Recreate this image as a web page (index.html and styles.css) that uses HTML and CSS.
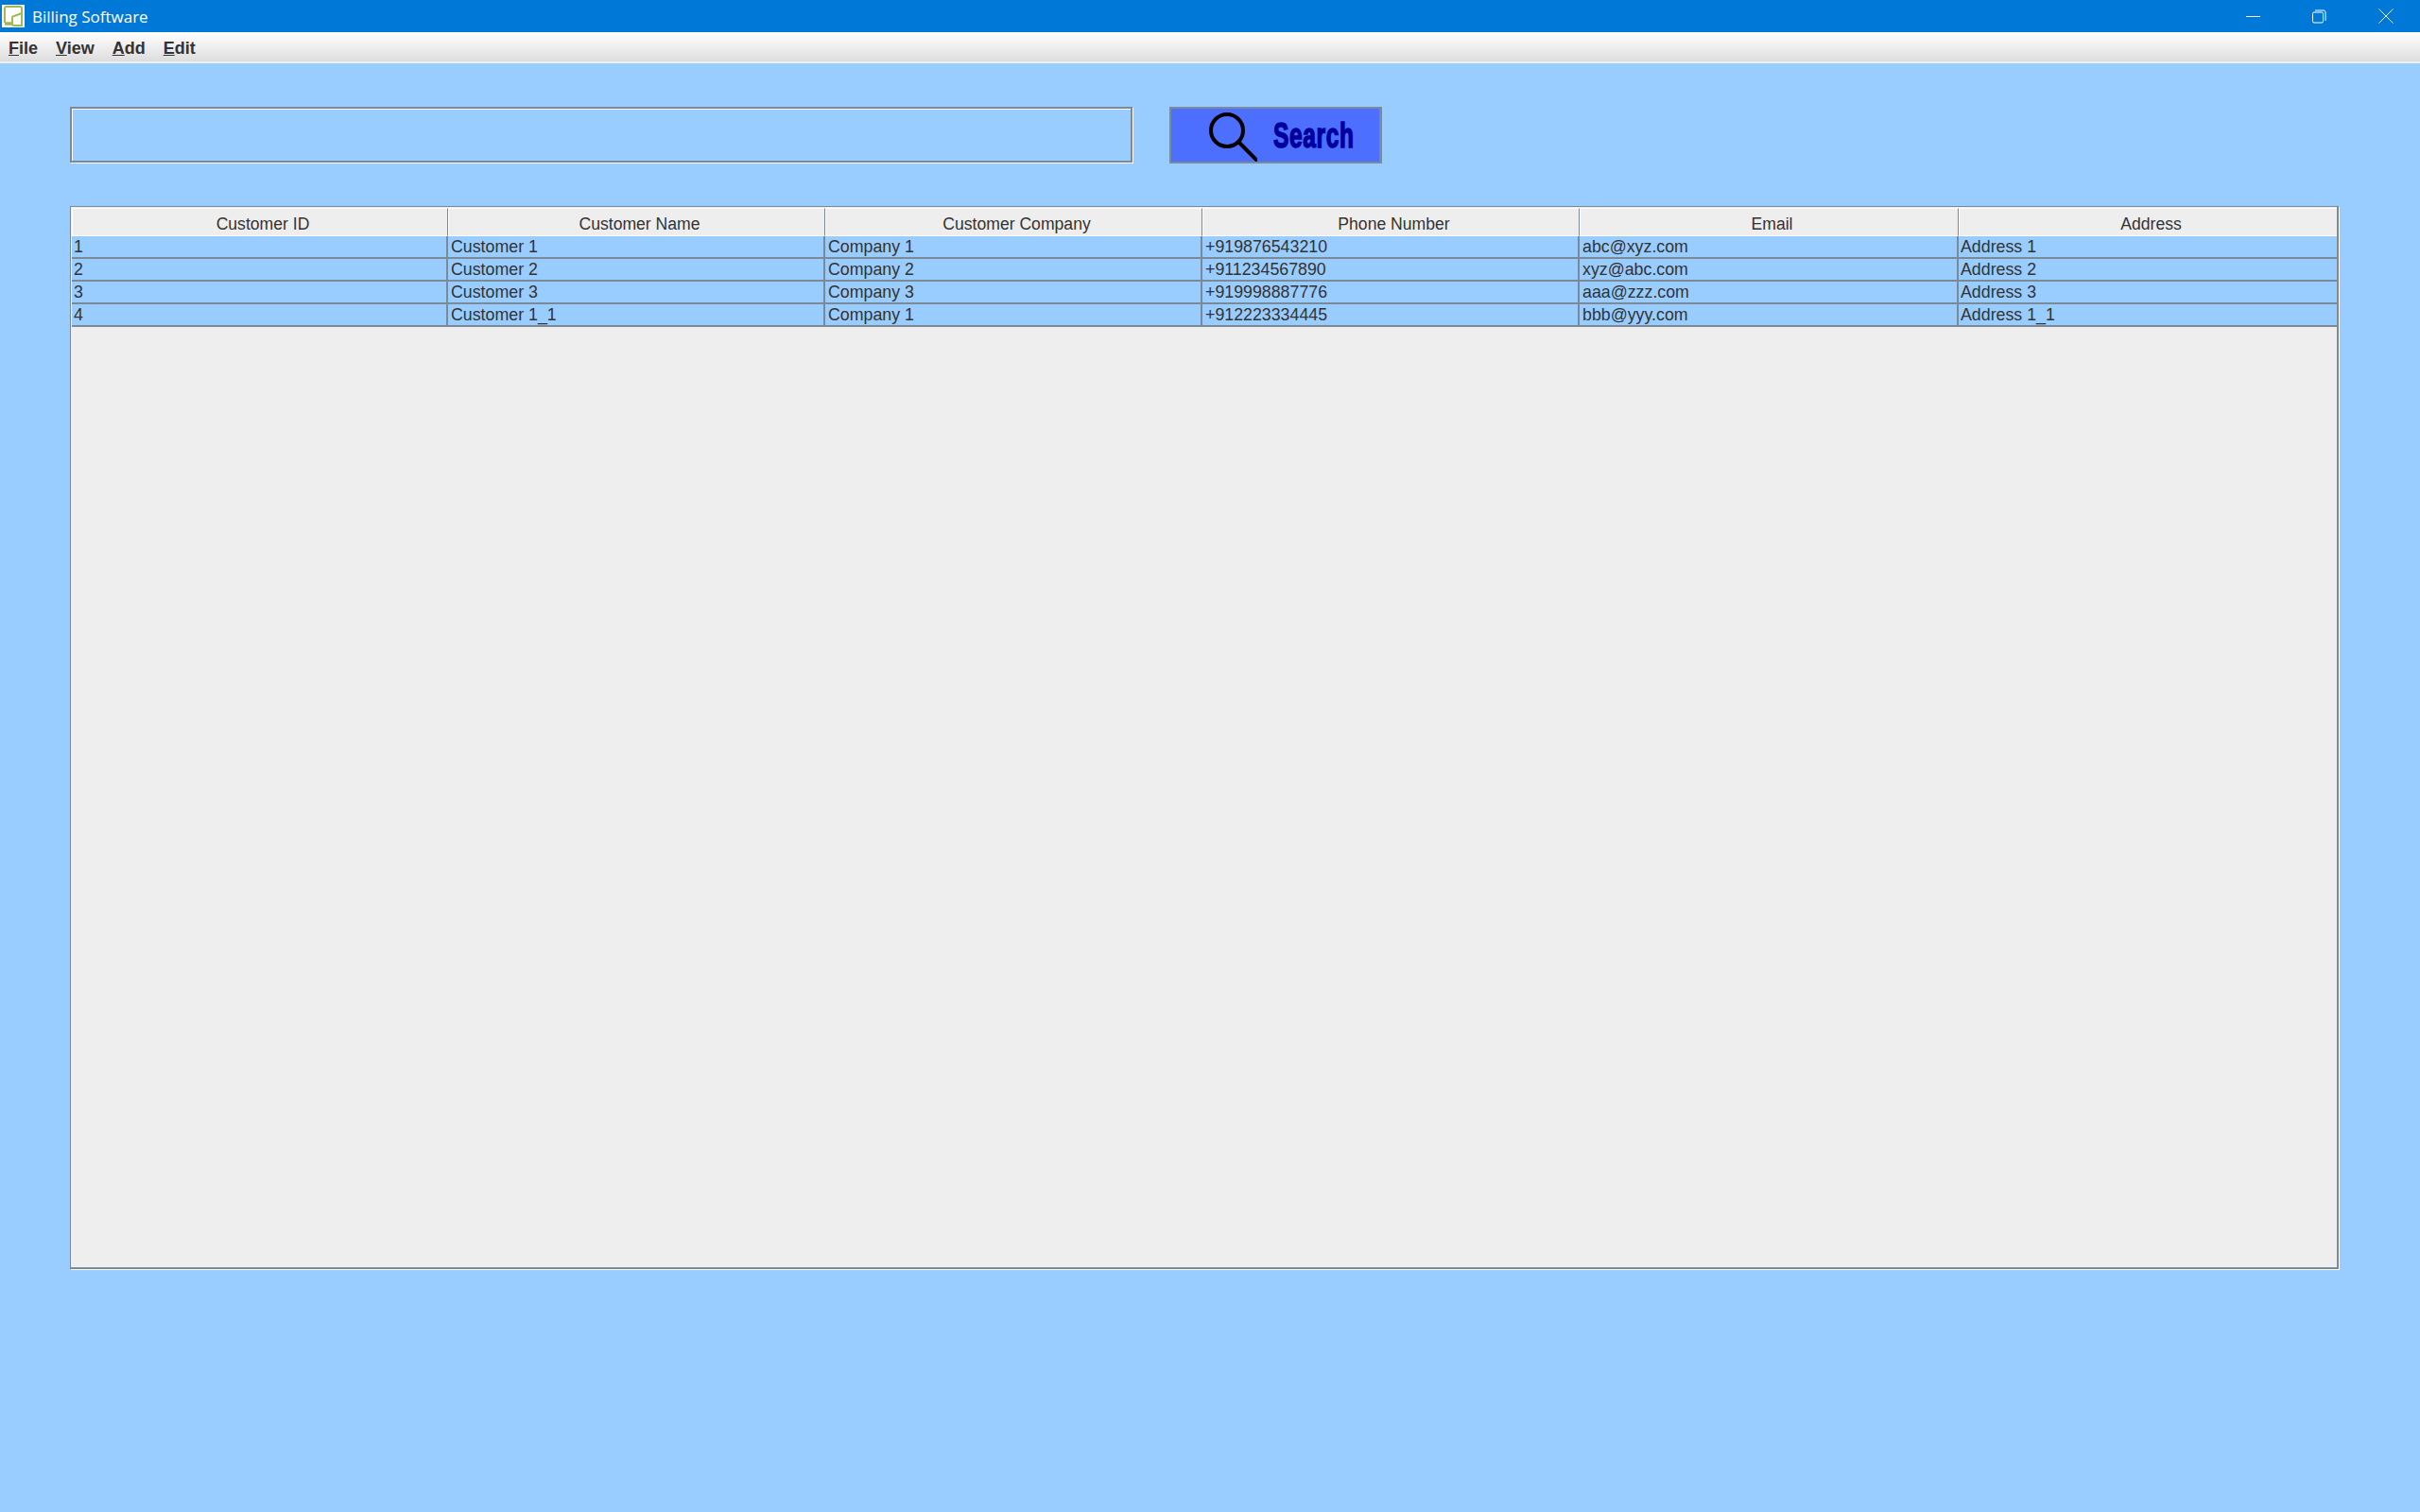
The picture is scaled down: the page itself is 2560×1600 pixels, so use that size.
FILE: index.html
```html
<!DOCTYPE html>
<html lang="en">
<head>
  <meta charset="utf-8">
  <title>Billing Software</title>
  <link rel="stylesheet" href="styles.css">
</head>
<body>

<header class="titlebar">
  <svg class="app-icon" width="24" height="24" viewBox="0 0 24 24">
    <rect width="24" height="24" fill="#fff"/>
    <path d="M3 19V4q0-2 2-2h14q2 0 2 2v18h-8q-2 0-2-2v-6q0-2 2-2l8-3" fill="none" stroke="#a3b84f" stroke-width="2"/>
    <path d="M3 20h8" fill="none" stroke="#a3b84f" stroke-width="3.500"/>
  </svg>
  <span class="app-title">Billing Software</span>
  <div class="win-btns">
    <svg class="win-btn" width="16" height="16" viewBox="0 0 16 16"><path d="M0 8.500h15" stroke="#fff" fill="none"/></svg>
    <svg class="win-btn" width="16" height="16" viewBox="0 0 16 16"><path d="M1.500 5.500q0-1.500 1.500-1.500h8q1.500 0 1.500 1.500v8q0 1.500-1.500 1.500h-8q-1.500 0-1.500-1.500zM4 2h9q2 0 2 2v9" stroke="#fff" fill="none"/></svg>
    <svg class="win-btn win-close" width="16" height="16" viewBox="0 0 16 16"><path d="M.5.500l15 15M15.500.500l-15 15" stroke="#fff" fill="none"/></svg>
  </div>
</header>

<nav class="menubar">
  <span class="menu"><u>F</u>ile</span>
  <span class="menu"><u>V</u>iew</span>
  <span class="menu"><u>A</u>dd</span>
  <span class="menu"><u>E</u>dit</span>
</nav>

<main class="content">
  <div class="search-row">
    <input class="search-box" type="text">
    <button class="search-btn">
      <svg width="56" height="56" viewBox="0 0 56 56">
        <circle cx="24" cy="23" r="17" fill="none" stroke="#000" stroke-width="4"/>
        <path d="M37 36l18 18" stroke="#000" stroke-width="4" stroke-linecap="round" fill="none"/>
      </svg>
      <span class="search-label">Search</span>
    </button>
  </div>

  <div class="table-panel">
    <table class="customers">
      <colgroup>
        <col class="c1"><col class="c2"><col class="c3"><col class="c4"><col class="c5"><col class="c6">
      </colgroup>
      <thead>
        <tr>
          <th>Customer ID</th>
          <th>Customer Name</th>
          <th>Customer Company</th>
          <th>Phone Number</th>
          <th>Email</th>
          <th>Address</th>
        </tr>
      </thead>
      <tbody>
        <tr><td>1</td><td>Customer 1</td><td>Company 1</td><td>+919876543210</td><td>abc@xyz.com</td><td>Address 1</td></tr>
        <tr><td>2</td><td>Customer 2</td><td>Company 2</td><td>+911234567890</td><td>xyz@abc.com</td><td>Address 2</td></tr>
        <tr><td>3</td><td>Customer 3</td><td>Company 3</td><td>+919998887776</td><td>aaa@zzz.com</td><td>Address 3</td></tr>
        <tr><td>4</td><td>Customer 1_1</td><td>Company 1</td><td>+912223334445</td><td>bbb@yyy.com</td><td>Address 1_1</td></tr>
      </tbody>
    </table>
  </div>
</main>

</body>
</html>
```

FILE: styles.css
```css
:root { --sky:#99ccff; --line:#7a8a99; --panel:#eeeeee; --ink:#333333; }
html,body{height:100%}
body{margin:0;display:flex;flex-direction:column;background:var(--sky);color:var(--ink);
     font:17.800px/1 "Liberation Sans",Arial,sans-serif;overflow:hidden}

.titlebar{height:34px;flex:none;display:flex;align-items:center;background:#0078d7;color:#fff;padding-left:2px}
.app-icon{flex:none;margin-top:-1px}
.app-title{margin-left:8px;font:17px/1 "Open Sans","Noto Sans",sans-serif}
.win-btns{margin-left:auto;display:flex;gap:53px;padding-right:28px}
.win-btn{display:block}
.win-close{margin-left:2px}

.menubar{height:33px;flex:none;display:flex;align-items:center;gap:19px;padding-left:9px;box-sizing:border-box;
         background:linear-gradient(#ffffff,#dddddd);border-bottom:2px solid #eeeeee;
         font-weight:700;font-size:18px}
.menu{position:relative;top:1px}

.content{flex:1;padding:46px 86px 0 74px;display:flex;flex-direction:column}

.search-row{display:flex;gap:39px;align-items:flex-start}
.search-box{width:1124px;height:59px;box-sizing:border-box;margin:0;padding:0;background:var(--sky);
            border:2px solid var(--line);outline:none;
            box-shadow:inset 1px 1px 0 #fff,1px 1px 0 #fff}
.search-btn{width:225px;height:60px;box-sizing:border-box;margin:0;padding:0 0 0 35px;display:flex;align-items:center;
            background:#4d6fff;border:2px solid var(--line);border-right-width:3px}
.search-btn svg{flex:none}
.search-label{margin:2px 0 0 17px;font:700 36px/1 "Liberation Sans",sans-serif;color:#00009c;
              display:inline-block;width:84px;transform:scaleX(.68);transform-origin:0 50%;
              -webkit-text-stroke:1.500px #00009c;letter-spacing:1px}

.table-panel{margin-top:45px;width:2400px;height:1125px;box-sizing:border-box;background:var(--panel);
             border:1px solid var(--line);border-right-width:2px;border-bottom-width:2px;
             padding:1px 0 0 1px;box-shadow:1px 1px 0 #fff}

.customers{border-collapse:separate;border-spacing:0;table-layout:fixed;width:2396px}
.c1{width:398px} .c2{width:399px} .c3{width:399px} .c4{width:399px} .c5{width:401px} .c6{width:400px}
.customers th{height:30px;box-sizing:border-box;padding:5px 0 0 6px;font-weight:400;font-size:17.600px;text-align:center;
              background:var(--panel);border-top:1px solid #fff;border-left:1px solid #fff;
              border-right:1px solid var(--line);border-bottom:1px solid #fff}
.customers td{height:24px;box-sizing:border-box;padding:2px 0 0 3px;background:var(--sky);
              border-right:2px solid var(--line);border-bottom:2px solid var(--line);overflow:hidden;white-space:nowrap}
.customers td:first-child{padding-left:2px}
.customers th:last-child{border-right:none}
.customers td:last-child{border-right:none;padding-left:2px}
```
